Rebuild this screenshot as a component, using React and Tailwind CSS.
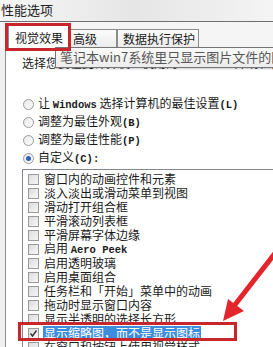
const items = [
  "窗口内的动画控件和元素",
  "淡入淡出或滑动菜单到视图",
  "滑动打开组合框",
  "平滑滚动列表框",
  "平滑屏幕字体边缘",
  ["启用 ", "Aero Peek"],
  "启用透明玻璃",
  "启用桌面组合",
  "任务栏和「开始」菜单中的动画",
  "拖动时显示窗口内容",
  "显示半透明的选择长方形",
  "显示缩略图，而不是显示图标",
  "在窗口和按钮上使用视觉样式",
];

const mono = "font-['Liberation_Mono',monospace] text-[10.5px] font-bold";

const Radio = ({ checked }) => (
  <span className="w-[11px] h-[11px] rounded-full border border-[#9a9a9a] bg-gradient-to-br from-[#e9e9e9] to-[#fdfdfd] flex items-center justify-center shrink-0">
    {checked && <span className="w-[5px] h-[5px] rounded-full bg-[#2a64b8]" />}
  </span>
);

const Check = ({ checked }) => (
  <span className="w-[11px] h-[11px] border border-[#9a9a9a] bg-gradient-to-br from-[#dcdcdc] to-[#f7f7f7] flex items-center justify-center shrink-0">
    {checked && (
      <svg width="9" height="9" viewBox="0 0 9 9">
        <path d="M1.5 4.5 L3.5 7 L7.5 1.5" fill="none" stroke="#333" strokeWidth="1.4" />
      </svg>
    )}
  </span>
);

export default function App() {
  return (
    <div className="relative w-[273px] h-[347px] overflow-hidden bg-[#f0f0f0] text-[#1a1a1a] font-['Noto_Sans_CJK_SC',sans-serif] flex flex-col">
      {/* title */}
      <div className="h-[21px] shrink-0 bg-gradient-to-r from-[#f6f6f6] via-[#e6e6e6] to-[#f4f4f4] text-[13px] leading-[17px] pt-px pl-[1px] text-[#222]">
        性能选项
      </div>
      <div className="h-px shrink-0 bg-[#707070]" />

      {/* tabs */}
      <div className="h-[26px] shrink-0 flex items-end pl-[8px] relative z-10 bg-[#f5f5f5]">
        <div className="h-[24px] -mb-px bg-white border border-b-0 border-[#8c8c8c] px-[6px] pt-[4px] text-[12px] leading-[15px]">
          视觉效果
        </div>
        <div className="h-[19px] border border-b-0 border-l-0 border-[#8c8c8c] bg-gradient-to-b from-[#fbfbfb] to-[#ececec] px-[3px] pt-[1px] text-[12px] leading-[15px] w-[47px]">
          高级
        </div>
        <div className="h-[19px] border border-b-0 border-[#8c8c8c] bg-gradient-to-b from-[#fbfbfb] to-[#ececec] pl-[5px] pr-[3px] pt-[1px] text-[12px] leading-[15px]">
          数据执行保护
        </div>
      </div>

      {/* panel */}
      <div className="flex-1 min-h-0 overflow-hidden ml-[5px] border-l border-t border-[#8c8c8c] bg-white flex flex-col">
        <div className="shrink-0 pl-[16px] pt-[7px] text-[12px] leading-[14px] whitespace-nowrap">
          选择您要在此计算机上使用的 Windows 外观和性能设置。
        </div>

        <div className="shrink-0 mt-[25px] pl-[17px] flex flex-col">
          {[
            [["让 ", <span key="w" className={mono}>Windows</span>, " 选择计算机的最佳设置", <span key="l" className={mono}>(L)</span>], false],
            [["调整为最佳外观", <span key="b" className={mono}>(B)</span>], false],
            [["调整为最佳性能", <span key="p" className={mono}>(P)</span>], false],
            [["自定义", <span key="c" className={mono}>(C):</span>], true],
          ].map(([label, on], i) => (
            <div key={i} className="h-[18px] flex items-center gap-[4px] text-[12px] leading-[14px] whitespace-nowrap">
              <Radio checked={on} />
              <span>{label}</span>
            </div>
          ))}
        </div>

        <div className="shrink-0 mt-[2px] ml-[16px] border-l border-t border-[#828790] pt-[2px] pl-[5px]">
          {items.map((t, i) => {
            const sel = i === 11;
            return (
              <div key={i} className="h-[14px] flex items-center gap-[5px] text-[12px] leading-[14px] whitespace-nowrap">
                <Check checked={sel} />
                {Array.isArray(t) ? (
                  <span>
                    {t[0]}
                    <span className={mono}>{t[1]}</span>
                  </span>
                ) : (
                  <span className={sel ? "bg-[#3e8ddd] text-white px-px -ml-px" : ""}>{t}</span>
                )}
              </div>
            );
          })}
        </div>
      </div>

      {/* tooltip */}
      <div className="absolute left-[55px] top-[47px] w-[240px] h-[21px] border border-[#767676] bg-gradient-to-b from-[#fafafa] to-[#ececec] text-[#575757] text-[13px] leading-[18px] pl-[4px] whitespace-nowrap z-20 shadow-[1px_1px_2px_rgba(0,0,0,0.2)]">
        笔记本win7系统里只显示图片文件的图标
      </div>

      {/* annotations */}
      <div className="absolute left-[5px] top-[23px] w-[66px] h-[28px] border-[3px] border-[#c8252c] z-30" />
      <div className="absolute left-[18px] top-[322px] w-[219px] h-[19px] border-[3px] border-[#c8252c] z-30" />
      <svg className="absolute inset-0 z-30 pointer-events-none" width="273" height="347" viewBox="0 0 273 347">
        <path d="M276 252 L234 306" stroke="#e3262b" strokeWidth="5" strokeLinecap="round" />
        <polygon points="223,321 228,299 244,311" fill="#e3262b" />
      </svg>
    </div>
  );
}
